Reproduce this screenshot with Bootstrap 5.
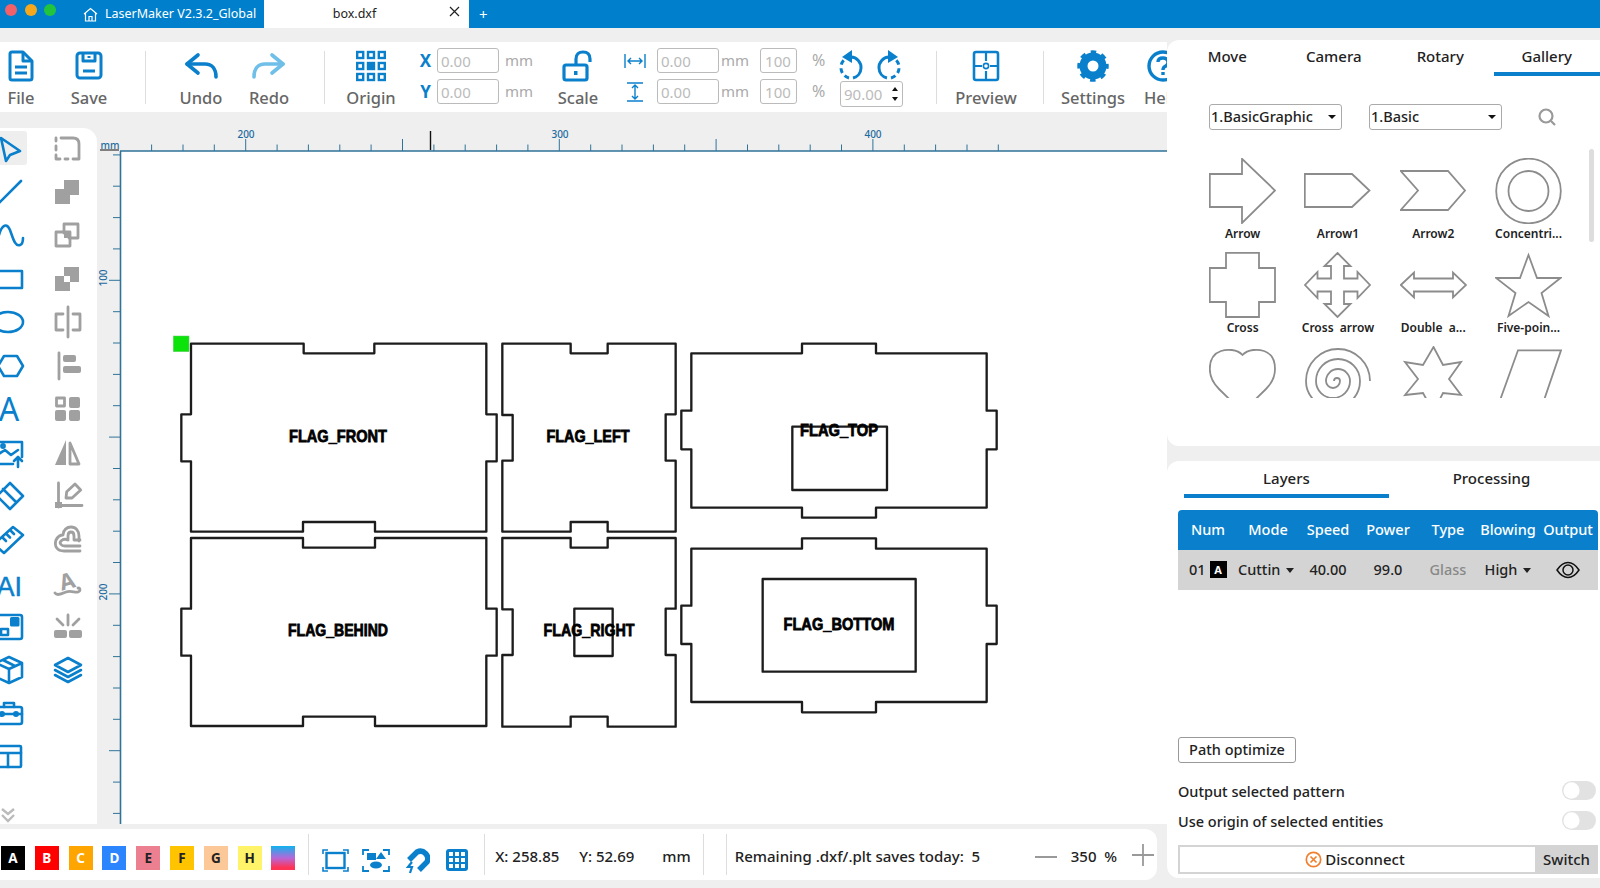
<!DOCTYPE html>
<html lang="en">
<head>
<meta charset="UTF-8">
<title>LaserMaker</title>
<link href="https://cdn.jsdelivr.net/npm/bootstrap@5.3.0/dist/css/bootstrap.min.css" rel="stylesheet">
<style>
body { width: 1600px; height: 888px; overflow: hidden; background: #efefef; font-family: "Noto Sans", "Liberation Sans", sans-serif; color: #222; }
svg { display: block; }

/* title bar */
.title-bar { height: 28px; background: #0080cc; color: #fff; font-size: 12.5px; flex: none; }
.light { width: 12px; height: 12px; border-radius: 50%; margin-top: 4px; }
.lights { margin-left: 5px; gap: 7.5px; width: 78px; }
.home-tab { width: 181px; gap: 3px; padding-left: 0; }
.doc-tab { width: 205px; background: #fff; color: #222; position: relative; }
.doc-close { position: absolute; right: 9px; top: 6px; }
.new-tab { margin-left: 10px; font-size: 15px; }

/* toolbar */
.left-col { width: 1167px; overflow: hidden; flex: none; }
.tool-strip { height: 70px; margin-top: 14px; background: #fff; flex: none; }
.tb-item { padding-top: 8px; flex: none; overflow: visible; text-align: center; }
.tb-ico { height: 32px; }
.tb-label { font-size: 16.5px; font-weight: 500; color: #666; line-height: 24px; margin-top: 4px; white-space: nowrap; }
.tb-div { width: 1px; height: 53px; background: #ddd; margin-top: 9px; flex: none; }
.tb-in { height: 25px; padding: 0 3px; font-size: 15px; color: #bbb; border: 1px solid #bbb; border-radius: 3px; background: #fff; box-shadow: none; }
.tb-in:focus { border-color: #bbb; box-shadow: none; color: #bbb; }
.tb-unit { color: #aaa; font-size: 15px; line-height: 25px; }
.ax { width: 23px; flex: none; color: #0a80cc; font-weight: 700; font-size: 17px; line-height: 25px; text-align: center; }
.xy-mm { margin-left: 6px; }
.w62 { width: 62px; flex: none; }
.w37 { width: 37px; flex: none; }
.m-save { margin-left: 22px; width: 50px; }
.m-d1 { margin-left: 31px; }
.m-undo { margin-left: 30px; width: 50px; }
.m-redo { margin-left: 18px; width: 50px; }
.m-d2 { margin-left: 30px; }
.m-origin { margin-left: 16px; width: 60px; }
.m-xy { margin-left: 13px; margin-top: 6px; gap: 6px; width: 117px; flex: none; }
.m-scale { margin-left: 22px; width: 50px; }
.m-wh { margin-left: 18px; margin-top: 6px; gap: 6px; flex: none; width: 208px; }
.m-rot { margin-left: 11px; width: 63px; flex: none; padding-top: 8px; }
.m-d3 { margin-left: 33px; }
.m-prev { margin-left: 14px; width: 70px; }
.m-d4 { margin-left: 22px; }
.m-set { margin-left: 14px; width: 70px; }
.m-help { margin-left: 16px; width: 40px; text-align: left; }
.wh-ico { width: 28px; height: 25px; flex: none; }
.wh-mm { margin: 0 11px 0 2px; }
.pct { width: 20px; margin-left: 15px; font-size: 16px; line-height: 25px; color: #aaa; }
.rot-a { margin-left: -4px; }
.rot-b { margin-right: -1px; }
.spin-box { height: 26px; margin-top: 1px; border: 1px solid #bbb; border-radius: 3px; padding-left: 3px; font-size: 15px; color: #bbb; line-height: 24px; }
.spin-arrow { width: 0; height: 0; border-left: 3.5px solid transparent; border-right: 3.5px solid transparent; }
.spin-arrow.up { border-bottom: 4px solid #111; }
.spin-arrow.down { border-top: 4px solid #111; }
.spin-btns { padding: 5px 4px 5px 0; }

/* tools */
.work-area { margin-top: 16px; height: 696px; flex: none; }
.tool-panel { width: 97px; background: #fff; border-top-right-radius: 14px; overflow: hidden; flex: none; padding-top: 3px; position: relative; }
.tool-grid { display: grid; grid-template-columns: 56px 34px; grid-auto-rows: 34px; row-gap: 9.5px; margin-left: -5px; }
.tool-on { background: #eee; border-radius: 3px; width: 32px; }
.ti-b { fill: none; stroke: #0a80cc; stroke-width: 2.6; stroke-linejoin: round; stroke-linecap: round; }
.ti-g { fill: none; stroke: #a0a0a0; stroke-width: 2.8; stroke-linejoin: round; stroke-linecap: round; }
.tf-b { fill: #0a80cc; }
.tf-g { fill: #a0a0a0; }
.more-tools { margin: auto 0 1px 0; }

/* status bar */
.status-strip { height: 51px; margin: 5px 10px 0 0; background: #fff; border-radius: 0 12px 12px 0; font-size: 15px; font-weight: 500; flex: none; white-space: nowrap; }
.swatch { width: 24px; height: 24px; margin-right: 9.8px; margin-top: 17px; text-align: center; font-size: 13.5px; font-weight: 700; line-height: 24px; flex: none; }
.sw-first { margin-left: 1px; }
.sw-grad { background: linear-gradient(#0fb3ee, #b667d8 50%, #ff3355 90%); }
.st-div { width: 1px; height: 41px; background: #ddd; margin-top: 5px; flex: none; }
.st-ico { margin-top: 19px; flex: none; }
.st-text { margin-top: 16px; line-height: 22px; }

/* right side */
.right-col { width: 433px; padding-top: 11.5px; flex: none; }
.side-panel { background: #fff; border-radius: 12px 0 0 12px; flex: none; overflow: hidden; position: relative; }
.gallery-panel { height: 406.5px; }
.layers-panel { height: 417px; margin-top: 15px; padding: 0 2px 0 11px; }
.side-tabs { font-size: 15px; font-weight: 500; }
.side-tabs .nav-link { color: #222; padding: 0; height: 36px; line-height: 32px; border-bottom: 4px solid transparent; border-radius: 0; }
.side-tabs .nav-link.active { border-bottom-color: #0a80cc; }
.gallery-tabs { margin-left: 7px; }
.layer-tabs { margin: 0 10px 0 6px; width: 410px; }
.layer-tabs .nav-link { height: 37px; line-height: 34px; }
.pick-row { margin: 28px 0 0 42px; height: 26px; gap: 27px; }
.pick { width: 133px; height: 26px; padding: 0 5px 0 1px; border: 1px solid #aaa; border-radius: 3px; font-size: 14.5px; font-weight: 500; color: #222; background: #fff; }
.pick::after { color: #111; }
.shape-clip { height: 242px; margin: 26px 0 0 28px; overflow: hidden; }
.shape-grid { display: grid; grid-template-columns: repeat(4, 95.3px); grid-auto-rows: 94px; }
.shape-cell { font-size: 12px; font-weight: 600; line-height: 18px; text-align: center; white-space: nowrap; color: #222; padding-top: 2px; }
.shape-cell svg { margin: 0 auto 1px; fill: none; stroke: #8c8c8c; stroke-width: 1.8; }
.gallery-scroll { position: absolute; right: 6px; top: 109.5px; width: 5px; height: 93px; background: #ddd; border-radius: 3px; }
.layer-table { width: 420px; table-layout: fixed; margin: 12px 0 0 0; font-size: 14.5px; font-weight: 500; text-align: center; }
.layer-table th { background: #0a80cc; color: #fff; height: 40px; padding: 0; font-weight: 500; vertical-align: middle; white-space: nowrap; border: 0; box-shadow: none; }
.layer-table th:first-child { border-top-left-radius: 4px; }
.layer-table th:last-child { border-top-right-radius: 4px; }
.layer-table td { background: #d4d4d4; color: #222; height: 40px; padding: 0; vertical-align: middle; white-space: nowrap; border: 0; box-shadow: none; }
.layer-tag { display: inline-block; width: 17px; height: 17px; background: #000; color: #fff; font-size: 11px; font-weight: 700; line-height: 17px; margin-left: 4px; vertical-align: 1px; text-align: center; }
.caret-cell::after { content: ""; display: inline-block; margin-left: 6px; vertical-align: 2px; border-top: 5px solid #222; border-left: 4px solid transparent; border-right: 4px solid transparent; }
.num-cell { text-align: left; padding-left: 11px !important; }
.mode-cell { text-align: left; padding-left: 0 !important; }
.glass-cell { color: #888 !important; }
.path-btn { width: 118px; height: 26px; margin-top: 147px; padding: 0; font-size: 14.5px; font-weight: 500; border: 1px solid #999; border-radius: 3px; color: #222; background: #fff; }
.opt-row { font-size: 14.5px; font-weight: 500; height: 30px; padding-right: 2px; }
.opt-first { margin-top: 14px; }
.form-switch .slide-tgl { width: 34px; height: 18.5px; margin: 0; float: none; background-color: #e2e2e2; border: 0; background-image: url("data:image/svg+xml,%3csvg xmlns='http://www.w3.org/2000/svg' viewBox='-4 -4 8 8'%3e%3ccircle r='3.4' fill='%23fff'/%3e%3c/svg%3e"); opacity: 1; box-shadow: none; }
.form-switch.tgl-wrap { padding: 0; min-height: 0; margin: 0; }
.link-box { height: 29px; width: 420px; margin-top: 8px; font-size: 15px; font-weight: 500; }
.link-main { width: 357px; border: 2px solid #d4d4d4; border-right: 0; gap: 3px; padding-right: 5px; }
.link-switch { width: 63px; background: #d4d4d4; }
.canvas-text { font-family: "Liberation Sans", sans-serif; font-weight: 700; font-size: 17px; fill: #000; stroke: #000; stroke-width: .8px; text-anchor: middle; }
.ruler-text { font-family: "Noto Sans", sans-serif; font-size: 10px; font-weight: 500; fill: #1c6a9e; text-anchor: middle; }
</style>
</head>
<body class="d-flex flex-column">

<div class="title-bar d-flex">
    <div class="lights d-flex">
        <div class="light" style="background:#f2606a"></div>
        <div class="light" style="background:#f5a81c"></div>
        <div class="light" style="background:#22c43e"></div>
    </div>
    <div class="home-tab d-flex align-items-center">
        <svg width="15" height="15" viewBox="0 0 15 15" fill="none" stroke="#fff" stroke-width="1.2"><path d="M1 7 7.5 1.5 14 7M2.5 6V14H12.5V6M6 14V9.5H9V14"/></svg>
        <span class="ps-1">LaserMaker V2.3.2_Global</span>
    </div>
    <div class="doc-tab d-flex align-items-center justify-content-center">
        <span class="pe-4">box.dxf</span>
        <svg class="doc-close" width="11" height="11" viewBox="0 0 11 11" stroke="#222" stroke-width="1.2"><path d="M1 1 10 10M10 1 1 10"/></svg>
    </div>
    <div class="new-tab d-flex align-items-center">+</div>
</div>

<div class="d-flex flex-grow-1">
    <div class="left-col d-flex flex-column">

        <div class="tool-strip d-flex">
            <div class="tb-item" style="width:42px">
                <div class="tb-ico d-flex justify-content-center">
                    <svg width="26" height="32" viewBox="0 0 26 32" fill="none" stroke="#0a80cc" stroke-width="3" stroke-linejoin="round"><path d="M2 4Q2 2 4 2H15L24 11V28Q24 30 22 30H4Q2 30 2 28Z"/><path d="M15 2V11H24"/><path d="M7 17H19M7 23H19"/></svg>
                </div>
                <div class="tb-label">File</div>
            </div>
            <div class="tb-item m-save">
                <div class="tb-ico d-flex justify-content-center">
                    <svg width="28" height="30" viewBox="0 0 28 30" fill="none" stroke="#0a80cc" stroke-width="3" stroke-linejoin="round"><rect x="2" y="3" width="24" height="25" rx="3"/><path d="M8 3V11H20V3M14 6V8M8 21H20"/></svg>
                </div>
                <div class="tb-label">Save</div>
            </div>
            <div class="tb-div m-d1"></div>
            <div class="tb-item m-undo">
                <div class="tb-ico d-flex justify-content-center">
                    <svg width="34" height="30" viewBox="0 0 34 30" fill="none" stroke="#0a80cc" stroke-width="3.6" stroke-linecap="round" stroke-linejoin="round"><path d="M14 5 3 14 14 23"/><path d="M3 14H21C28 14 32 19 32 27"/></svg>
                </div>
                <div class="tb-label">Undo</div>
            </div>
            <div class="tb-item m-redo">
                <div class="tb-ico d-flex justify-content-center">
                    <svg width="34" height="30" viewBox="0 0 34 30" fill="none" stroke="#6fbfe8" stroke-width="3.6" stroke-linecap="round" stroke-linejoin="round"><path d="M20 5 31 14 20 23"/><path d="M31 14H13C6 14 2 19 2 27"/></svg>
                </div>
                <div class="tb-label">Redo</div>
            </div>
            <div class="tb-div m-d2"></div>
            <div class="tb-item m-origin">
                <div class="tb-ico d-flex justify-content-center">
                    <svg width="30" height="32" viewBox="0 0 30 32" fill="none" stroke="#0a80cc" stroke-width="2.4"><rect x="1.2" y="2" width="6" height="6"/><rect x="12" y="2" width="6" height="6"/><rect x="22.8" y="2" width="6" height="6"/><rect x="1.2" y="13" width="6" height="6"/><rect x="10.8" y="11.8" width="8.4" height="8.4" fill="#0a80cc" stroke="none"/><rect x="22.8" y="13" width="6" height="6"/><rect x="1.2" y="24" width="6" height="6"/><rect x="12" y="24" width="6" height="6"/><rect x="22.8" y="24" width="6" height="6"/></svg>
                </div>
                <div class="tb-label">Origin</div>
            </div>
            <div class="m-xy d-flex flex-column">
                <div class="d-flex"><div class="ax">X</div><input class="form-control tb-in w62" value="0.00" readonly><div class="tb-unit xy-mm">mm</div></div>
                <div class="d-flex"><div class="ax">Y</div><input class="form-control tb-in w62" value="0.00" readonly><div class="tb-unit xy-mm">mm</div></div>
            </div>
            <div class="tb-item m-scale">
                <div class="tb-ico d-flex justify-content-center">
                    <svg width="34" height="32" viewBox="0 0 34 32" fill="none" stroke="#0a80cc" stroke-width="3.2"><path d="M15 14V9C15 4 18 2 22 2S29 4 29 9V12"/><rect x="3" y="15" width="23" height="15" rx="2"/><rect x="13" y="21" width="3.5" height="4" fill="#0a80cc" stroke="none"/></svg>
                </div>
                <div class="tb-label">Scale</div>
            </div>
            <div class="m-wh d-flex flex-column">
                <div class="d-flex">
                    <div class="wh-ico d-flex justify-content-center align-items-center">
                        <svg width="22" height="16" viewBox="0 0 22 16" fill="none" stroke="#0a80cc" stroke-width="1.4"><path d="M1 1V15M21 1V15M4 8H18M7 5 4 8 7 11M15 5 18 8 15 11"/></svg>
                    </div>
                    <input class="form-control tb-in w62 ms-2" value="0.00" readonly>
                    <div class="tb-unit wh-mm">mm</div>
                    <input class="form-control tb-in w37 px-1" value="100" readonly>
                    <div class="pct">%</div>
                </div>
                <div class="d-flex">
                    <div class="wh-ico d-flex justify-content-center align-items-center">
                        <svg width="18" height="20" viewBox="0 0 18 20" fill="none" stroke="#0a80cc" stroke-width="1.4"><path d="M1 1H17M1 19H17M9 3V17M6 6 9 3 12 6M6 14 9 17 12 14"/></svg>
                    </div>
                    <input class="form-control tb-in w62 ms-2" value="0.00" readonly>
                    <div class="tb-unit wh-mm">mm</div>
                    <input class="form-control tb-in w37 px-1" value="100" readonly>
                    <div class="pct">%</div>
                </div>
            </div>
            <div class="m-rot">
                <div class="d-flex justify-content-between" style="height:30px">
                    <svg class="rot-a" width="30" height="30" viewBox="0 0 30 30" fill="none" stroke="#0a80cc" stroke-width="3"><path d="M15 7A10.500 10.500 0 0 1 25 18 10.500 10.500 0 0 1 17 28"/><path d="M13 28A10.500 10.500 0 0 1 5 18 10.500 10.500 0 0 1 8 10" stroke-dasharray="5 3.500"/><path d="M16 0 6 7 16 13Z" fill="#0a80cc" stroke="none"/></svg>
                    <svg class="rot-b" width="30" height="30" viewBox="0 0 30 30" fill="none" stroke="#0a80cc" stroke-width="3"><path d="M15 7A10.500 10.500 0 0 0 5 18 10.500 10.500 0 0 0 13 28"/><path d="M17 28A10.500 10.500 0 0 0 25 18 10.500 10.500 0 0 0 22 10" stroke-dasharray="5 3.500"/><path d="M14 0 24 7 14 13Z" fill="#0a80cc" stroke="none"/></svg>
                </div>
                <div class="spin-box d-flex justify-content-between">
                    <span>90.00</span>
                    <div class="spin-btns d-flex flex-column justify-content-between">
                        <div class="spin-arrow up"></div>
                        <div class="spin-arrow down"></div>
                    </div>
                </div>
            </div>
            <div class="tb-div m-d3"></div>
            <div class="tb-item m-prev">
                <div class="tb-ico d-flex justify-content-center">
                    <svg width="28" height="32" viewBox="0 0 28 32" fill="none" stroke="#0a80cc" stroke-width="2.6"><rect x="2" y="2" width="24" height="28" rx="2"/><path d="M14 2V11M14 21V30M2 16H10M18 16H26" stroke-width="2.2"/><circle cx="14" cy="16" r="2.6" stroke-width="1.6"/></svg>
                </div>
                <div class="tb-label">Preview</div>
            </div>
            <div class="tb-div m-d4"></div>
            <div class="tb-item m-set">
                <div class="tb-ico d-flex justify-content-center">
                    <svg width="32" height="32" viewBox="0 0 32 32" fill="none" stroke="#0a80cc"><circle cx="16" cy="16" r="9.5" stroke-width="8"/><circle cx="16" cy="16" r="13.5" stroke-width="4.5" stroke-dasharray="5.3 5.3" stroke-dashoffset="2.6"/></svg>
                </div>
                <div class="tb-label">Settings</div>
            </div>
            <div class="tb-item m-help">
                <div class="tb-ico">
                    <svg width="32" height="32" viewBox="0 0 32 32" fill="none" stroke="#0a80cc" stroke-width="3.4"><circle cx="19" cy="16" r="14"/><path d="M14 12Q14 8 19 8 24 8 24 12.5 24 15 21 16.5 19 17.5 19 20M19 22V25"/></svg>
                </div>
                <div class="tb-label">Help</div>
            </div>
        </div>

        <div class="work-area d-flex">
            <div class="tool-panel d-flex flex-column">
                <div class="tool-grid">
                    <div class="tool-on"><svg width="34" height="34" viewBox="0 0 34 34"><path class="ti-b" d="M6 7 25 20 15 24 11 30Z"/></svg></div>
                    <svg width="34" height="34" viewBox="0 0 34 34"><path class="ti-g" d="M10 7H22Q28 7 28 13V28H22M17 28H14M9 28H5V24M5 19V15M5 10V7"/></svg>

                    <svg width="34" height="34" viewBox="0 0 34 34"><path class="ti-b" d="M26 6 4 28"/></svg>
                    <svg width="34" height="34" viewBox="0 0 34 34"><path class="tf-g" d="M13 5H28V20H19V29H4V14H13Z"/></svg>

                    <svg width="34" height="34" viewBox="0 0 34 34"><path class="ti-b" d="M4 17C7 6 12 5 15 12 18 20 20 29 25 27 28 26 28 22 28 20"/></svg>
                    <svg width="34" height="34" viewBox="0 0 34 34"><path class="ti-g" d="M13 15V6H27V20H18" stroke-width="2.2"/><rect class="ti-g" x="5" y="14" width="14" height="14" stroke-width="2.2"/><rect class="tf-g" x="13" y="14" width="6" height="6"/></svg>

                    <svg width="34" height="34" viewBox="0 0 34 34"><rect class="ti-b" x="1" y="9" width="26" height="17"/></svg>
                    <svg width="34" height="34" viewBox="0 0 34 34"><path class="tf-g" d="M13 5H28V20H19V14H13ZM4 14H13V20H19V29H4Z"/></svg>

                    <svg width="34" height="34" viewBox="0 0 34 34"><ellipse class="ti-b" cx="13" cy="17" rx="15" ry="10"/></svg>
                    <svg width="34" height="34" viewBox="0 0 34 34"><path class="ti-g" d="M17 2V32M12 9H5V25H12M22 9H29V25H22"/></svg>

                    <svg width="34" height="34" viewBox="0 0 34 34"><path class="ti-b" d="M3 17 9 7H22L28 17 22 27H9Z"/></svg>
                    <svg width="34" height="34" viewBox="0 0 34 34"><path class="ti-g" d="M8 4V30"/><rect class="tf-g" x="12" y="6" width="13" height="7" rx="2"/><rect class="tf-g" x="12" y="17" width="18" height="7" rx="2"/></svg>

                    <svg width="34" height="34" viewBox="0 0 34 34"><text x="14" y="29" font-family="Noto Sans, sans-serif" font-size="32" fill="#0a80cc" text-anchor="middle">A</text></svg>
                    <svg width="34" height="34" viewBox="0 0 34 34"><rect class="ti-g" x="5.5" y="6" width="8" height="8" stroke-width="2.4"/><rect class="tf-g" x="18" y="5" width="11" height="11" rx="2"/><rect class="tf-g" x="4" y="18" width="11" height="11" rx="2"/><rect class="tf-g" x="18" y="18" width="11" height="11" rx="2"/></svg>

                    <svg width="34" height="34" viewBox="0 0 34 34"><path class="ti-b" d="M18 28H2V6H27V21" stroke-width="2.2"/><path class="ti-b" d="M2 19 10 14 16 19 23 14" stroke-width="2"/><circle class="ti-b" cx="8" cy="10" r="1.6" stroke-width="1.6"/><path class="ti-b" d="M23 31V22M19 25 23 21 27 25" stroke-width="2.4"/></svg>
                    <svg width="34" height="34" viewBox="0 0 34 34"><path class="tf-g" d="M15 4V29H4Z"/><path class="ti-g" d="M19 7V28H28Z" stroke-width="2.2"/></svg>

                    <svg width="34" height="34" viewBox="0 0 34 34"><path class="ti-b" d="M15 4 28 17 15 30 2 17ZM8 10 21 23"/></svg>
                    <svg width="34" height="34" viewBox="0 0 34 34"><path class="ti-g" d="M7.500 4V28M7 26.500H31"/><rect class="tf-g" x="4" y="23" width="7" height="6"/><path class="ti-g" d="M15 19 15.700 12.700 24 5 29.700 11 21 19Z" stroke-width="2.2"/></svg>

                    <svg width="34" height="34" viewBox="0 0 34 34"><path class="ti-b" d="M-1 21 18 4 28 12 9 30Z"/><path class="ti-b" d="M8 15 11 18M12 11.500 15 14.500M16 8 19 11" stroke-width="2"/></svg>
                    <svg width="34" height="34" viewBox="0 0 34 34"><path class="ti-g" d="M29 28H13C6 28 3 23 5 17 7 13 10 12 12 12 12 7 16 4 20 4 25 4 28 8 28 13V18"/><path class="ti-g" d="M29 23H14C10 23 8 20 10 18 12 16 15 16 17 17V13C17 10 18 9 20 9 22 9 23 11 23 13V17H29" stroke-width="2.2"/></svg>

                    <svg width="34" height="34" viewBox="0 0 34 34"><text x="27" y="30" font-family="Liberation Sans, sans-serif" font-size="27" fill="#0a80cc" stroke="#0a80cc" stroke-width=".5" text-anchor="end">TAI</text></svg>
                    <svg width="34" height="34" viewBox="0 0 34 34"><text x="16" y="23" transform="rotate(-15 16 15)" font-family="Noto Sans, sans-serif" font-size="22" font-weight="700" fill="#a0a0a0" text-anchor="middle">A</text><path class="ti-g" d="M4 27C6 30 10 28 15 26 20 24 24 27 27 26 30 25 29 21 27 22"/></svg>

                    <svg width="34" height="34" viewBox="0 0 34 34"><rect class="ti-b" x="1" y="5" width="26" height="24" rx="2"/><rect class="tf-b" x="15" y="7" width="9.500" height="9.500" rx="1.500"/><rect class="ti-b" x="6" y="19" width="7" height="6" stroke-width="2"/></svg>
                    <svg width="34" height="34" viewBox="0 0 34 34"><rect class="tf-g" x="3" y="20" width="13" height="8" rx="2"/><rect class="tf-g" x="18" y="20" width="13" height="8" rx="2"/><path class="ti-g" d="M17 5V15M6 9 12 15M28 9 22 15"/></svg>

                    <svg width="34" height="34" viewBox="0 0 34 34"><path class="ti-b" d="M14 4 27 10V24L14 30 1 24V10ZM1 10 14 16 27 10M14 16V30M8 7 20 13"/></svg>
                    <svg width="34" height="34" viewBox="0 0 34 34"><path class="ti-b" d="M17 5 30 12 17 19 4 12ZM4 17 17 24 30 17M4 22 17 29 30 22"/></svg>

                    <svg width="34" height="34" viewBox="0 0 34 34"><rect class="ti-b" x="1" y="10" width="26" height="17" rx="2"/><path class="ti-b" d="M9 10V6H19V10M1 17H27"/><circle class="tf-b" cx="7" cy="17" r="3"/><circle class="tf-b" cx="21" cy="17" r="3"/></svg>
                    <div></div>

                    <svg width="34" height="34" viewBox="0 0 34 34"><rect class="ti-b" x="1" y="6" width="25" height="21" rx="1"/><path class="ti-b" d="M1 13H26M13 13V27"/></svg>
                </div>
                <div class="more-tools">
                    <svg width="16" height="16" viewBox="0 0 16 16" fill="none" stroke="#bbb" stroke-width="2.4"><path d="M2 2 8 7 14 2M2 8 8 14 14 8"/></svg>
                </div>
            </div>

            <svg id="canvasView" width="1070" height="696" viewBox="97 128 1070 696">
                <rect x="97" y="128" width="1070" height="696" fill="#efefef"/>
                <rect x="121" y="151" width="1046" height="673" fill="#fff"/>
                <path id="rulerTicks" stroke="#2f7399" stroke-width="1" fill="none"/>
                <path d="M120 151H1167M120.500 151V824" stroke="#2f7399" stroke-width="1.600" fill="none"/>
                <path d="M430.500 131V150" stroke="#111" stroke-width="1.400"/>
                <text class="ruler-text" x="110" y="149">mm</text>
                <path d="M100 150H119" stroke="#111"/>
                <text class="ruler-text" x="246" y="138">200</text>
                <text class="ruler-text" x="560" y="138">300</text>
                <text class="ruler-text" x="873" y="138">400</text>
                <text class="ruler-text" transform="translate(107,278) rotate(-90)">100</text>
                <text class="ruler-text" transform="translate(107,592) rotate(-90)">200</text>

                <rect x="173.300" y="336" width="15.700" height="15.700" fill="#0be30b" stroke="#6c6" stroke-width=".5"/>
                <g transform="translate(160,320) scale(.33333)" fill="none" stroke="#1c1c1c" stroke-width="7" stroke-linejoin="round">
                    <path d="M93 71H431V100H643V71H979V283H1010V424H979V635H645V606H429V635H93V424H64V283H93Z"/>
                    <path d="M93 654H429V683H645V654H979V866H1010V1007H979V1218H645V1190H429V1218H93V1007H64V866H93Z"/>
                    <path d="M1027 71H1232V100H1343V71H1547V283H1517V422H1547V635H1343V606H1232V635H1027V422H1058V285H1027Z"/>
                    <path d="M1027 654H1232V683H1343V654H1547V866H1517V1005H1547V1220H1343V1190H1232V1220H1027V1005H1058V868H1027Z"/>
                    <rect x="1243" y="866" width="115" height="142"/>
                </g>
                <g transform="translate(670,320) scale(.33333)" fill="none" stroke="#1c1c1c" stroke-width="7" stroke-linejoin="round">
                    <path d="M64 100H396V71H618V100H950V272H980V388H950V563H618V593H396V563H64V388H34V272H64Z"/>
                    <rect x="367" y="320" width="284" height="190"/>
                    <path d="M64 686H396V655H618V686H950V857H980V972H950V1146H618V1177H396V1146H64V972H34V857H64Z"/>
                    <rect x="278" y="777" width="459" height="278"/>
                </g>
                <text class="canvas-text" x="338" y="441.500" textLength="98" lengthAdjust="spacingAndGlyphs">FLAG_FRONT</text>
                <text class="canvas-text" x="588" y="441.500" textLength="83" lengthAdjust="spacingAndGlyphs">FLAG_LEFT</text>
                <text class="canvas-text" x="338" y="636" textLength="100" lengthAdjust="spacingAndGlyphs">FLAG_BEHIND</text>
                <text class="canvas-text" x="589" y="636" textLength="91" lengthAdjust="spacingAndGlyphs">FLAG_RIGHT</text>
                <text class="canvas-text" x="839" y="435.500" textLength="78" lengthAdjust="spacingAndGlyphs">FLAG_TOP</text>
                <text class="canvas-text" x="839" y="630" textLength="111" lengthAdjust="spacingAndGlyphs">FLAG_BOTTOM</text>
            </svg>
        </div>

        <div class="status-strip d-flex">
            <div class="swatch sw-first bg-black text-white">A</div>
            <div class="swatch text-white" style="background:#f00">B</div>
            <div class="swatch text-white" style="background:#ffa500">C</div>
            <div class="swatch text-white" style="background:#2a85ff">D</div>
            <div class="swatch" style="background:#ec8090">E</div>
            <div class="swatch" style="background:#ffc400">F</div>
            <div class="swatch" style="background:#fdc897">G</div>
            <div class="swatch" style="background:#fff36a">H</div>
            <div class="swatch sw-grad"></div>
            <div class="st-div me-3" style="margin-left:3px"></div>
            <svg class="st-ico" style="margin-left:-3px" width="27" height="25" viewBox="0 0 27 25" fill="none" stroke="#0a80cc" stroke-width="2.400"><rect x="4.500" y="5" width="18" height="15"/><path d="M1 6V2H6M21 2H26V6M26 19V23H21M6 23H1V19" stroke-width="1.600"/></svg>
            <svg class="st-ico" style="margin-left:13px" width="28" height="25" viewBox="0 0 28 25" fill="none" stroke="#0a80cc" stroke-width="1.800"><path d="M1 7V2H7M21 2H27V7M27 18V23H21M7 23H1V18"/><rect x="5" y="5" width="9" height="7" fill="#0a80cc" stroke="none"/><path d="M19 4 24 11H14Z" fill="#0a80cc" stroke="none"/><ellipse cx="14" cy="17" rx="6" ry="3.500" fill="#0a80cc" stroke="none"/></svg>
            <svg class="st-ico" style="margin-left:14px" width="26" height="26" viewBox="0 0 26 26" fill="none" stroke="#0a80cc" stroke-width="5.500"><path d="M5 12 13 4A7.500 7.500 0 0 1 23 14L15 22"/><path d="M8 14 4 19H8L6 25" stroke-width="2.200"/></svg>
            <svg class="st-ico" style="margin-left:15px" width="24" height="24" viewBox="0 0 24 24"><rect x="1" y="1" width="22" height="22" rx="3" fill="#0a80cc"/><g fill="#fff"><rect x="4" y="4" width="4" height="4"/><rect x="10" y="4" width="4" height="4"/><rect x="16" y="4" width="4" height="4"/><rect x="4" y="10" width="4" height="4"/><rect x="10" y="10" width="4" height="4"/><rect x="16" y="10" width="4" height="4"/><rect x="4" y="16" width="4" height="4"/><rect x="10" y="16" width="4" height="4"/><rect x="16" y="16" width="4" height="4"/></g></svg>
            <div class="st-div" style="margin-left:15px"></div>
            <div class="st-text" style="margin-left:10px;width:84px">X: 258.85</div>
            <div class="st-text">Y: 52.69</div>
            <div class="st-text" style="margin-left:28px">mm</div>
            <div class="st-div" style="margin-left:12px"></div>
            <div class="st-div" style="margin-left:22px"></div>
            <div class="st-text" style="margin-left:8px;width:300px">Remaining .dxf/.plt saves today:&nbsp; 5</div>
            <svg class="st-ico" style="margin-top:17px" width="22" height="22" viewBox="0 0 22 22" stroke="#999" stroke-width="2"><path d="M0 11H22"/></svg>
            <div class="st-text" style="margin-left:14px">350 &nbsp;%</div>
            <svg class="st-ico" style="margin:15px 0 0 15px" width="22" height="22" viewBox="0 0 22 22" stroke="#999" stroke-width="1.800"><path d="M0 11H22M11 0V22"/></svg>
        </div>
    </div>

    <div class="right-col d-flex flex-column">
        <div class="side-panel gallery-panel">
            <ul class="nav nav-justified side-tabs gallery-tabs">
                <li class="nav-item"><a class="nav-link" href="#">Move</a></li>
                <li class="nav-item"><a class="nav-link" href="#">Camera</a></li>
                <li class="nav-item"><a class="nav-link" href="#">Rotary</a></li>
                <li class="nav-item"><a class="nav-link active" href="#">Gallery</a></li>
            </ul>
            <div class="pick-row d-flex align-items-center">
                <button class="pick dropdown-toggle d-flex justify-content-between align-items-center">1.BasicGraphic</button>
                <button class="pick dropdown-toggle d-flex justify-content-between align-items-center">1.Basic</button>
                <svg class="ms-2" width="20" height="20" viewBox="0 0 20 20" fill="none" stroke="#999" stroke-width="2.200"><circle cx="9" cy="9" r="6.500"/><path d="M14 14 18 18"/></svg>
            </div>
            <div class="shape-clip">
                <div class="shape-grid">
                    <div class="shape-cell"><svg width="67" height="66" viewBox="0 0 67 66"><path d="M.8 16H33V.8L66 32.500 33 65V49H.8Z"/></svg>Arrow</div>
                    <div class="shape-cell"><svg width="67" height="66" viewBox="0 0 67 66"><path d="M.8 16H48L65.500 32.500 48 49H.8Z"/></svg>Arrow1</div>
                    <div class="shape-cell"><svg width="67" height="66" viewBox="0 0 67 66"><path d="M.8 13H48L65 32.500 48 52H.8L18 32.500Z"/></svg>Arrow2</div>
                    <div class="shape-cell"><svg width="67" height="66" viewBox="0 0 67 66"><circle cx="33.500" cy="33" r="32.300"/><circle cx="33.500" cy="33" r="20"/></svg>Concentri...</div>

                    <div class="shape-cell"><svg width="67" height="66" viewBox="0 0 67 66"><path d="M17 .8H50V16H66V50H50V65H17V50H.8V16H17Z"/></svg>Cross</div>
                    <div class="shape-cell"><svg width="67" height="66" viewBox="0 0 67 66"><path d="M33.500 1 46.500 14H40V26.500H53.500V20L66 33 53.500 46V39.500H40V52H46.500L33.500 65 20.500 52H27V39.500H13.500V46L1 33 13.500 20V26.500H27V14H20.500Z"/></svg>Cross &nbsp;arrow</div>
                    <div class="shape-cell"><svg width="67" height="66" viewBox="0 0 67 66"><path d="M.8 33 14 20.500V26.500H53V20.500L66 33 53 45.500V39.500H14V45.500Z"/></svg>Double &nbsp;a...</div>
                    <div class="shape-cell"><svg width="67" height="66" viewBox="0 0 67 66"><path d="M33.500 3 42 26H65.500L46.500 41 53.500 64 33.500 50 13.500 64 20.500 41 1 26H25Z"/></svg>Five-poin...</div>

                    <div class="shape-cell"><svg width="67" height="66" viewBox="0 0 67 66"><path d="M33.500 9C28 3 18 3 12 5 3 8 .8 15 .8 23 .8 31 4 37 10 43L33.500 66 57 43C63 37 66 31 66 23 66 15 64 8 55 5 49 3 39 3 33.500 9Z"/></svg></div>
                    <div class="shape-cell"><svg width="67" height="66" viewBox="0 0 67 66"><path d="M66 35A32 32 0 0 0 2 35 27 27 0 0 0 56 35 22 22 0 0 0 12 35 17 17 0 0 0 46 35 12 12 0 0 0 22 35 7 7 0 0 0 36 35 3 3 0 0 0 30 35"/></svg></div>
                    <div class="shape-cell"><svg width="67" height="66" viewBox="0 0 67 66"><path d="M33.500 1 43 19 61 16 49 33 61 49 43 47 33.500 66 23 47 5 49 18 33 5 16 23 19Z"/></svg></div>
                    <div class="shape-cell"><svg width="67" height="66" viewBox="0 0 67 66"><path d="M23 4.300H66L45 66H.8Z"/></svg></div>
                </div>
            </div>
            <div class="gallery-scroll"></div>
        </div>

        <div class="side-panel layers-panel d-flex flex-column">
            <ul class="nav nav-justified side-tabs layer-tabs">
                <li class="nav-item"><a class="nav-link active" href="#">Layers</a></li>
                <li class="nav-item"><a class="nav-link" href="#">Processing</a></li>
            </ul>
            <table class="table table-borderless layer-table">
                <thead>
                    <tr><th>Num</th><th>Mode</th><th>Speed</th><th>Power</th><th>Type</th><th>Blowing</th><th>Output</th></tr>
                </thead>
                <tbody>
                    <tr>
                        <td class="num-cell">01<span class="layer-tag">A</span></td>
                        <td class="mode-cell caret-cell">Cuttin</td>
                        <td>40.00</td>
                        <td>99.0</td>
                        <td class="glass-cell">Glass</td>
                        <td class="caret-cell">High</td>
                        <td><svg class="mx-auto" width="24" height="18" viewBox="0 0 24 18" fill="none" stroke="#111" stroke-width="1.500"><path d="M1 9C5 3 8 1.500 12 1.500S19 3 23 9C19 15 16 16.500 12 16.500S5 15 1 9Z"/><circle cx="12" cy="9" r="5"/></svg></td>
                    </tr>
                </tbody>
            </table>
            <button class="btn path-btn">Path optimize</button>
            <div class="opt-row opt-first d-flex justify-content-between align-items-center">
                <span>Output selected pattern</span>
                <div class="form-check form-switch tgl-wrap"><input class="form-check-input slide-tgl" type="checkbox" disabled></div>
            </div>
            <div class="opt-row d-flex justify-content-between align-items-center">
                <span>Use origin of selected entities</span>
                <div class="form-check form-switch tgl-wrap"><input class="form-check-input slide-tgl" type="checkbox" disabled></div>
            </div>
            <div class="link-box d-flex">
                <div class="link-main d-flex justify-content-center align-items-center">
                    <svg width="17" height="17" viewBox="0 0 17 17" fill="none" stroke="#f08030" stroke-width="1.700"><circle cx="8.500" cy="8.500" r="7.200"/><path d="M5.500 5.500 11.500 11.500M11.500 5.500 5.500 11.500"/></svg>
                    <span>Disconnect</span>
                </div>
                <div class="link-switch d-flex justify-content-center align-items-center">Switch</div>
            </div>
        </div>
    </div>
</div>

<script>
// ruler ticks, 10 units = 31.36px, labels sit on 100 unit marks
var d = "";
for (var i = -10; i < 25; i++) {
    var x = 245.7 + i * 31.36;
    if (x > 122) d += "M" + x.toFixed(1) + " " + (i % 5 == 0 ? 139 : 144.5) + "V151";
}
for (var j = -4; j < 18; j++) {
    var y = 280.3 + j * 31.36;
    if (y > 152) d += "M" + (j % 5 == 0 ? 109 : 113) + " " + y.toFixed(1) + "H121";
}
document.getElementById("rulerTicks").setAttribute("d", d);
</script>
<script src="https://cdn.jsdelivr.net/npm/bootstrap@5.3.0/dist/js/bootstrap.bundle.min.js"></script>
</body>
</html>
